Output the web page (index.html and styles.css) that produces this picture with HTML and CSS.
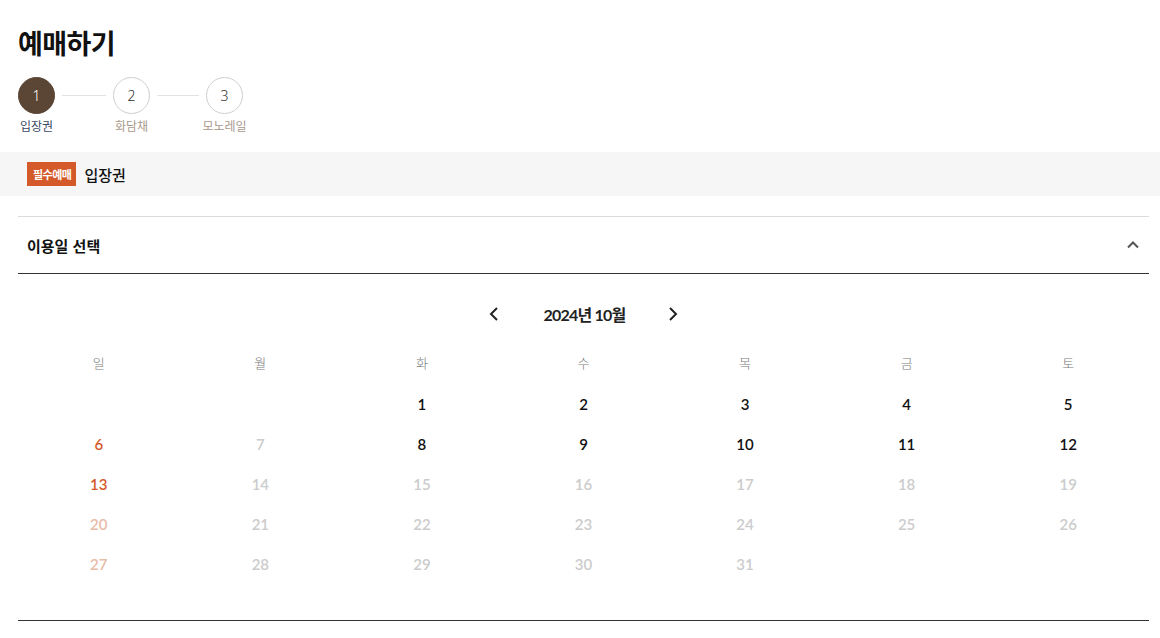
FILE: index.html
```html
<!DOCTYPE html>
<html lang="ko">
  <head>
    <meta charset="UTF-8" />
    <meta name="viewport" content="width=device-width, initial-scale=1.0" />
    <title>예매하기</title>
    <link rel="stylesheet" href="styles.css">
  </head>
  <body>
    <div class="page">
      <h1 class="title">예매하기</h1>

      <ol class="steps">
        <li class="step active">
          <span class="step-num">1</span>
          <span class="step-label">입장권</span>
        </li>
        <li class="step-line"></li>
        <li class="step">
          <span class="step-num">2</span>
          <span class="step-label">화담채</span>
        </li>
        <li class="step-line short"></li>
        <li class="step">
          <span class="step-num">3</span>
          <span class="step-label">모노레일</span>
        </li>
      </ol>
    </div>

    <div class="ticket-bar">
      <span class="badge">필수예매</span>
      <span class="ticket-name">입장권</span>
    </div>

    <div class="page">
      <section class="date-panel">
        <div class="panel-head">
          <h2>이용일 선택</h2>
          <svg class="toggle" width="14" height="14" viewBox="0 0 14 14">
            <path d="M2 9.5 L7 4.5 L12 9.5" fill="none" stroke="#555" stroke-width="2" />
          </svg>
        </div>

        <div class="calendar">
          <div class="month-nav">
            <button type="button" class="nav-btn">
              <svg width="12" height="16" viewBox="0 0 12 16">
                <path d="M9 2 L3 8 L9 14" fill="none" stroke="#222" stroke-width="2" />
              </svg>
            </button>
            <span class="month">2024년 10월</span>
            <button type="button" class="nav-btn">
              <svg width="12" height="16" viewBox="0 0 12 16">
                <path d="M3 2 L9 8 L3 14" fill="none" stroke="#222" stroke-width="2" />
              </svg>
            </button>
          </div>

          <div class="weekdays">
            <span>일</span><span>월</span><span>화</span><span>수</span><span>목</span><span>금</span><span>토</span>
          </div>

          <div class="days">
            <span></span><span></span>
            <span class="on">1</span><span class="on">2</span><span class="on">3</span><span class="on">4</span><span class="on">5</span>

            <span class="on sun">6</span><span class="off">7</span>
            <span class="on">8</span><span class="on">9</span><span class="on">10</span><span class="on">11</span><span class="on">12</span>

            <span class="on sun">13</span><span class="off">14</span><span class="off">15</span><span class="off">16</span><span class="off">17</span><span class="off">18</span><span class="off">19</span>

            <span class="off sun">20</span><span class="off">21</span><span class="off">22</span><span class="off">23</span><span class="off">24</span><span class="off">25</span><span class="off">26</span>

            <span class="off sun">27</span><span class="off">28</span><span class="off">29</span><span class="off">30</span><span class="off">31</span><span></span><span></span>
          </div>
        </div>
      </section>
    </div>
  </body>
</html>
```

FILE: styles.css
```css
body {
  margin: 0;
  background-color: #ffffff;
  font-family: "Noto Sans CJK KR", "Noto Sans", sans-serif;
  color: #111;
}

.page {
  padding: 0 11px 0 18px;
}

.title {
  margin: 0;
  padding-top: 24px;
  font-size: 27px;
  font-weight: 700;
  line-height: 38px;
  letter-spacing: -0.6px;
  color: #111;
}

.steps {
  list-style: none;
  margin: 0;
  padding: 15px 0 0 0;
  display: flex;
  align-items: flex-start;
  height: 62px;
}

.step {
  position: relative;
  width: 37px;
  display: flex;
  flex-direction: column;
  align-items: center;
}

.step-num {
  width: 35px;
  height: 35px;
  border-radius: 50%;
  border: 1px solid #cfcfcf;
  background: #fff;
  display: flex;
  align-items: center;
  justify-content: center;
  font-family: "Noto Sans", sans-serif;
  font-size: 14px;
  font-weight: 300;
  color: #333;
}

.step-label {
  margin-top: 4px;
  font-size: 12px;
  line-height: 16px;
  color: #a8998b;
  white-space: nowrap;
}

.step.active .step-num {
  background: #5b4636;
  border-color: #5b4636;
  color: #fff;
}

.step.active .step-label {
  color: #3b4a66;
}

.step-line {
  width: 44px;
  height: 1px;
  margin: 18px 7px 0 7px;
  background: #e2e2e2;
}

.step-line.short {
  width: 42px;
}

.ticket-bar {
  margin-top: 13px;
  height: 44px;
  background: #f6f6f6;
  display: flex;
  align-items: center;
  padding-left: 27px;
  gap: 8px;
}

.badge {
  background: #d45a2a;
  color: #fff;
  font-size: 11px;
  font-weight: 700;
  letter-spacing: -0.5px;
  height: 24px;
  line-height: 24px;
  padding: 0 5px 0 6px;
}

.ticket-name {
  font-size: 15px;
  font-weight: 500;
  color: #111;
}

.date-panel {
  margin-top: 20px;
  border-top: 1px solid #dcdcdc;
  border-bottom: 1px solid #333;
}

.panel-head {
  height: 56px;
  border-bottom: 1px solid #333;
  display: flex;
  align-items: center;
  justify-content: space-between;
  padding: 0 9px 0 9px;
}

.panel-head h2 {
  margin: 0;
  font-size: 15px;
  font-weight: 700;
  color: #111;
}

.calendar {
  padding: 27px 0 36px 0;
}

.month-nav {
  display: flex;
  justify-content: center;
  align-items: center;
  height: 26px;
}

.nav-btn {
  border: none;
  background: none;
  padding: 0;
  cursor: pointer;
  display: flex;
}

.month {
  font-family: "Lato", "Noto Sans CJK KR", sans-serif;
  font-size: 16px;
  font-weight: 700;
  letter-spacing: -0.8px;
  color: #222;
  margin: 0 42px 0 44px;
}

.weekdays,
.days {
  display: grid;
  grid-template-columns: repeat(7, 1fr);
  text-align: center;
}

.weekdays {
  margin-top: 19px;
  height: 38px;
  line-height: 34px;
  font-size: 13px;
  font-weight: 300;
  color: #7a7a7a;
}

.days span {
  height: 40px;
  line-height: 40px;
  font-family: "Lato", sans-serif;
  font-size: 15px;
  font-weight: 600;
}

.days .on {
  color: #111;
}

.days .off {
  color: #cccccc;
}

.days .on.sun {
  color: #d4592a;
}

.days .off.sun {
  color: #e9bba9;
}
```
